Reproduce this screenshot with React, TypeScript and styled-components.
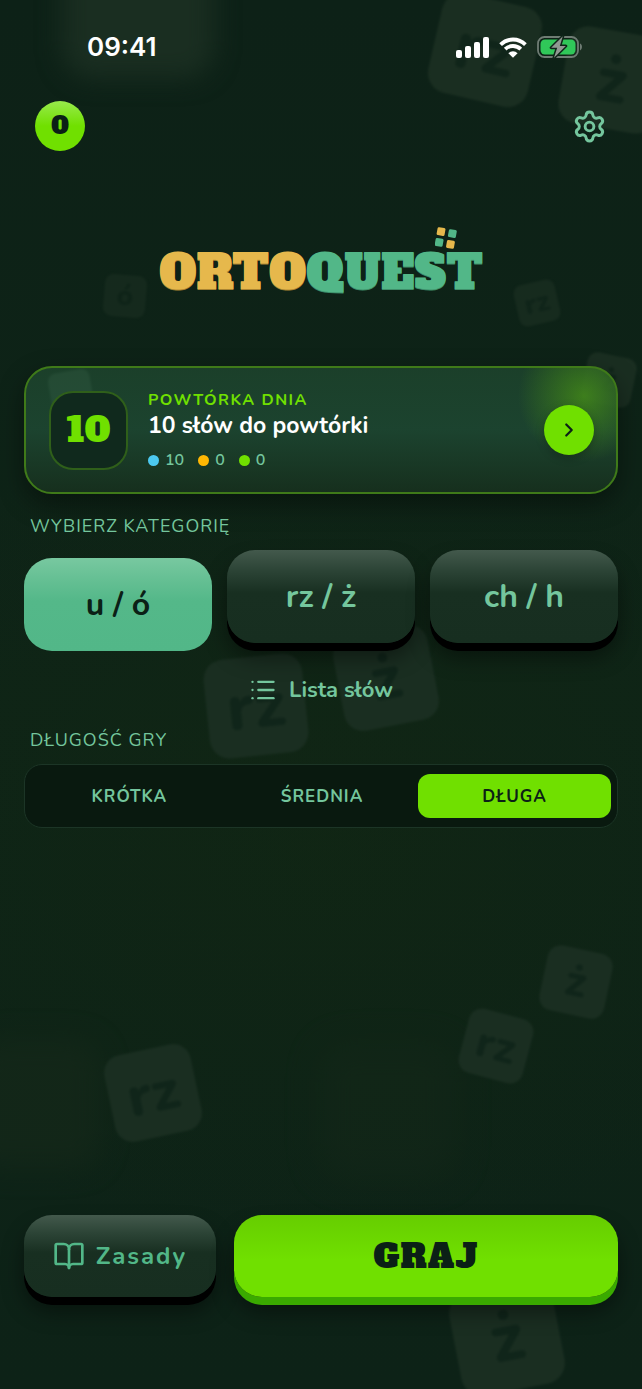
import React, { useState } from "react";
import styled, { createGlobalStyle, css } from "styled-components";
import { BookOpen, ChevronRight, List, Settings } from "lucide-react";

const sans = `"Nunito", "Lato", "Open Sans", sans-serif`;
const slab = `"Alfa Slab One", "DejaVu Serif Condensed", "DejaVu Serif", serif`;

const color = {
  bg: "#0d2217",
  ink: "#0b2016",
  lime: "#70e000",
  limeEdge: "#3aaa00",
  mint: "#74c69d",
  green: "#52b788",
  gold: "#e6b84c",
};

const GlobalStyle = createGlobalStyle`
  *, *::before, *::after { box-sizing: border-box; }
  body { margin: 0; background: ${color.bg}; font-family: ${sans}; }
  button { margin: 0; padding: 0; border: 0; background: none; font: inherit; cursor: pointer; }
`;

const Screen = styled.div`
  position: relative;
  min-height: 100vh;
  display: flex;
  flex-direction: column;
  overflow: hidden;
  color: #fff;
  background:
    radial-gradient(ellipse 90% 30% at 50% 60%, rgba(20, 40, 16, 0.4), transparent),
    linear-gradient(180deg, #0d2117 0%, #0e2417 50%, #0d2217 100%);
`;

const Backdrop = styled.div`
  position: absolute;
  inset: 0;
`;

interface TileProps {
  $x: number;
  $y: number;
  $size: number;
  $turn: number;
  $blur?: number;
  $fade?: number;
  $tone?: string;
}

const Tile = styled.span<TileProps>`
  position: absolute;
  left: ${(p) => (p.$x / 642) * 100}%;
  top: ${(p) => p.$y}px;
  width: ${(p) => p.$size}px;
  height: ${(p) => p.$size}px;
  display: grid;
  place-items: center;
  border-radius: 20%;
  background: ${(p) => p.$tone ?? "#1a2e21"};
  color: #10251a;
  font: 800 ${(p) => Math.round(p.$size * 0.66)}px / 1 ${sans};
  opacity: ${(p) => p.$fade ?? 1};
  filter: blur(${(p) => p.$blur ?? 1}px);
  transform: translate(-50%, -50%) rotate(${(p) => p.$turn}deg);
`;

const StatusBar = styled.div`
  position: relative;
  height: 94px;
  padding: 0 59px 0 87px;
  display: flex;
  align-items: center;
  justify-content: space-between;
`;

const Clock = styled.time`
  font: 600 26px/32px "Inter", sans-serif;
`;

const StatusIcons = styled.div`
  display: flex;
  align-items: center;
  gap: 10px;
`;

const TopBar = styled.header`
  position: relative;
  padding: 7px 35px;
  display: flex;
  align-items: center;
  justify-content: space-between;
`;

const Points = styled.span`
  width: 50px;
  height: 50px;
  display: grid;
  place-items: center;
  border-radius: 50%;
  background: linear-gradient(180deg, #98ea4c 0%, ${color.lime} 50%);
  color: ${color.ink};
  font: 400 24px/1 ${slab};
`;

const IconButton = styled.button`
  display: flex;
  color: ${color.mint};
`;

const Logo = styled.h1`
  position: relative;
  align-self: center;
  margin: 85px 0 63px;
  font: 400 47px/60px ${slab};
  color: ${color.green};
  text-shadow: 0 1px 0 #3f8f6a;
`;

const LogoStart = styled.span`
  color: ${color.gold};
  text-shadow: 0 1px 0 #a98432;
`;

const LogoMark = styled.svg`
  position: absolute;
  right: 26px;
  top: -16px;
`;

const Main = styled.main`
  position: relative;
  padding: 0 24px;
  display: flex;
  flex-direction: column;
`;

const ReviewCard = styled.section`
  padding: 22px 22px 22px 23px;
  display: flex;
  align-items: center;
  gap: 20px;
  border: 2px solid #3f7a19;
  border-radius: 28px;
  background:
    radial-gradient(circle 66px at right 32px top 28px, rgba(96, 190, 10, 0.48), transparent),
    linear-gradient(180deg, rgba(30, 70, 46, 0.82) 0%, rgba(31, 74, 52, 0.82) 50%, rgba(24, 50, 31, 0.82) 100%);
  box-shadow: 0 10px 26px rgba(0, 0, 0, 0.4);
`;

const CountBox = styled.div`
  flex: none;
  width: 79px;
  height: 79px;
  display: grid;
  place-items: center;
  border: 2px solid #2f5f1a;
  border-radius: 24px;
  background: #10291d;
  color: ${color.lime};
  font: 400 35px/1 ${slab};
`;

const ReviewText = styled.div`
  flex: 1;
  min-width: 0;
`;

const Eyebrow = styled.div`
  font-size: 16px;
  line-height: 20px;
  font-weight: 700;
  letter-spacing: 1.5px;
  color: ${color.lime};
`;

const ReviewTitle = styled.h2`
  margin: 0;
  font-size: 23px;
  line-height: 32px;
  font-weight: 700;
`;

const Stats = styled.ul`
  margin: 8px 0 0;
  padding: 0;
  display: flex;
  gap: 14px;
  list-style: none;
  font-size: 16px;
  line-height: 20px;
  font-weight: 600;
  color: ${color.mint};
`;

const Stat = styled.li<{ $dot: string }>`
  display: flex;
  align-items: center;
  gap: 6px;
  &::before {
    content: "";
    width: 11px;
    height: 11px;
    border-radius: 50%;
    background: ${(p) => p.$dot};
  }
`;

const RoundButton = styled.button`
  flex: none;
  width: 50px;
  height: 50px;
  display: grid;
  place-items: center;
  border-radius: 50%;
  background: ${color.lime};
  color: ${color.ink};
  box-shadow: 0 3px 8px rgba(0, 0, 0, 0.25);
`;

const SectionLabel = styled.h3`
  margin: 20px 6px 12px;
  font-size: 18px;
  line-height: 24px;
  font-weight: 400;
  letter-spacing: 1px;
  color: ${color.mint};
`;

const Categories = styled.div`
  display: grid;
  grid-template-columns: repeat(3, 1fr);
  gap: 15px;
`;

const raised = css`
  border-radius: 28px;
  background: linear-gradient(180deg, #43594c 0%, #2c4436 22%, #182f21 46%, #172e20 100%);
  box-shadow: 0 8px 0 #000, 0 14px 22px rgba(0, 0, 0, 0.45);
`;

const CategoryButton = styled.button<{ $active: boolean }>`
  ${raised}
  height: 93px;
  color: ${color.mint};
  font-size: 32px;
  font-weight: 700;
  ${(p) =>
    p.$active &&
    css`
      background: linear-gradient(180deg, #78c8a0 0%, #66c094 22%, #54b889 46%, #52b788 100%);
      box-shadow: none;
      color: ${color.ink};
      transform: translateY(8px);
    `}
`;

const ListButton = styled.button`
  align-self: center;
  margin: 32px 0 3px;
  display: flex;
  align-items: center;
  gap: 12px;
  color: ${color.mint};
  font-size: 22px;
  line-height: 30px;
  font-weight: 700;
`;

const Segments = styled.div`
  padding: 9px 6px 9px 8px;
  display: grid;
  grid-template-columns: repeat(3, 1fr);
  border: 1px solid #1c3526;
  border-radius: 18px;
  background: #09190f;
`;

const Segment = styled.label`
  height: 44px;
  display: grid;
  place-items: center;
  border-radius: 12px;
  color: ${color.mint};
  font-size: 17px;
  font-weight: 700;
  letter-spacing: 1px;
  cursor: pointer;
  &:has(input:checked) {
    background: ${color.lime};
    color: ${color.ink};
  }
`;

const SegmentInput = styled.input`
  position: absolute;
  opacity: 0;
  pointer-events: none;
`;

const Footer = styled.footer`
  position: relative;
  margin-top: auto;
  padding: 48px 24px 92px;
  display: grid;
  grid-template-columns: 1fr 2fr;
  gap: 18px;
`;

const RulesButton = styled.button`
  ${raised}
  height: 82px;
  display: flex;
  align-items: center;
  justify-content: center;
  gap: 11px;
  color: ${color.green};
  font-size: 24px;
  font-weight: 700;
  letter-spacing: 2px;
`;

const PlayButton = styled.button`
  height: 82px;
  border-radius: 28px;
  background: linear-gradient(180deg, #66cd00 0%, ${color.lime} 55%);
  box-shadow: 0 8px 0 ${color.limeEdge}, 0 14px 22px rgba(0, 0, 0, 0.45);
  color: ${color.ink};
  font: 400 33px/1 ${slab};
  letter-spacing: 1px;
`;

interface TileData {
  x: number;
  y: number;
  size: number;
  turn: number;
  text: string;
  blur?: number;
  fade?: number;
  tone?: string;
}

const tiles: TileData[] = [
  { x: 138, y: 2, size: 152, turn: 0, blur: 12, text: "" },
  { x: 36, y: 1104, size: 130, turn: 0, blur: 14, fade: 0.6, tone: "#16291a", text: "" },
  { x: 388, y: 1112, size: 140, turn: 0, blur: 16, fade: 0.4, tone: "#16291a", text: "" },
  { x: 485, y: 50, size: 102, turn: 13, text: "rz" },
  { x: 612, y: 80, size: 98, turn: 10, text: "ż" },
  { x: 125, y: 296, size: 42, turn: 5, fade: 0.65, text: "ó" },
  { x: 537, y: 303, size: 42, turn: -13, fade: 0.75, text: "rz" },
  { x: 609, y: 380, size: 50, turn: 12, text: "ż" },
  { x: 71, y: 392, size: 42, turn: -10, tone: "#3f5c4a", text: "" },
  { x: 256, y: 706, size: 99, turn: -6, text: "rz" },
  { x: 386, y: 678, size: 96, turn: -11, text: "ż" },
  { x: 576, y: 982, size: 66, turn: 12, text: "ż" },
  { x: 496, y: 1046, size: 66, turn: 15, text: "rz" },
  { x: 153, y: 1093, size: 88, turn: -12, text: "rz" },
  { x: 507, y: 1338, size: 105, turn: -11, text: "ż" },
];

const categories = ["u / ó", "rz / ż", "ch / h"];
const lengths = ["KRÓTKA", "ŚREDNIA", "DŁUGA"];

const Signal = () => (
  <svg width="33" height="21" viewBox="0 0 33 21" fill="#fff" aria-hidden="true">
    <rect x="0" y="13" width="6" height="8" rx="2" />
    <rect x="9" y="9" width="6" height="12" rx="2" />
    <rect x="18" y="5" width="6" height="16" rx="2" />
    <rect x="27" y="0" width="6" height="21" rx="2" />
  </svg>
);

const Wifi = () => (
  <svg width="28" height="21" viewBox="0 0 28 21" fill="none" aria-hidden="true">
    <path d="M1.6 7.6a17.6 17.6 0 0 1 24.8 0" stroke="#fff" strokeWidth="3.8" />
    <path d="M6.2 12.2a11.1 11.1 0 0 1 15.6 0" stroke="#fff" strokeWidth="3.8" />
    <path d="M9.4 16.2a6.6 6.6 0 0 1 9.2 0L14 20.8z" fill="#fff" />
  </svg>
);

const Battery = () => (
  <svg width="46" height="24" viewBox="0 0 46 24" aria-hidden="true">
    <rect x="1" y="2" width="40" height="20" rx="6.5" fill="none" stroke="#6f7c74" strokeWidth="1.8" />
    <rect x="3.5" y="4.5" width="35" height="15" rx="4.5" fill="#30c759" />
    <path d="M43 8.6c2.6.8 2.6 6 0 6.8z" fill="#6f7c74" />
    <path
      d="M25.8 1.2 14.2 12.8h6l-3.2 10L28.8 11h-6z"
      fill="#909892"
      stroke="#0f2519"
      strokeWidth="3"
      paintOrder="stroke"
      strokeLinejoin="round"
    />
  </svg>
);

export default function App() {
  const [category, setCategory] = useState(categories[0]);
  const [length, setLength] = useState(lengths[2]);

  return (
    <>
      <GlobalStyle />
      <Screen>
        <Backdrop aria-hidden="true">
          {tiles.map((t) => (
            <Tile
              key={`${t.x}-${t.y}`}
              $x={t.x}
              $y={t.y}
              $size={t.size}
              $turn={t.turn}
              $blur={t.blur}
              $fade={t.fade}
              $tone={t.tone}
            >
              {t.text}
            </Tile>
          ))}
        </Backdrop>

        <StatusBar>
          <Clock>09:41</Clock>
          <StatusIcons>
            <Signal />
            <Wifi />
            <Battery />
          </StatusIcons>
        </StatusBar>

        <TopBar>
          <Points>0</Points>
          <IconButton type="button" aria-label="Ustawienia">
            <Settings size={35} strokeWidth={2} />
          </IconButton>
        </TopBar>

        <Logo>
          <LogoStart>ORTO</LogoStart>QUEST
          <LogoMark width="22" height="22" viewBox="0 0 22 22" aria-hidden="true">
            <g transform="rotate(10 11 11)">
              <rect x="1" y="1.5" width="8" height="8" rx="1.5" fill={color.gold} />
              <rect x="12.5" y="1.5" width="8" height="8" rx="1.5" fill={color.green} />
              <rect x="1" y="12.5" width="8" height="8" rx="1.5" fill={color.green} />
              <rect x="12.5" y="12.5" width="8" height="8" rx="1.5" fill={color.gold} />
            </g>
          </LogoMark>
        </Logo>

        <Main>
          <ReviewCard>
            <CountBox>10</CountBox>
            <ReviewText>
              <Eyebrow>POWTÓRKA DNIA</Eyebrow>
              <ReviewTitle>10 słów do powtórki</ReviewTitle>
              <Stats>
                <Stat $dot="#4cc9f0">10</Stat>
                <Stat $dot="#ffb703">0</Stat>
                <Stat $dot={color.lime}>0</Stat>
              </Stats>
            </ReviewText>
            <RoundButton type="button" aria-label="Rozpocznij powtórkę">
              <ChevronRight size={22} strokeWidth={2.4} />
            </RoundButton>
          </ReviewCard>

          <SectionLabel>WYBIERZ KATEGORIĘ</SectionLabel>
          <Categories>
            {categories.map((c) => (
              <CategoryButton
                key={c}
                type="button"
                aria-pressed={c === category}
                $active={c === category}
                onClick={() => setCategory(c)}
              >
                {c}
              </CategoryButton>
            ))}
          </Categories>

          <ListButton type="button">
            <List size={28} strokeWidth={2} />
            Lista słów
          </ListButton>

          <SectionLabel>DŁUGOŚĆ GRY</SectionLabel>
          <Segments role="radiogroup" aria-label="Długość gry">
            {lengths.map((l) => (
              <Segment key={l}>
                <SegmentInput type="radio" name="length" checked={l === length} onChange={() => setLength(l)} />
                {l}
              </Segment>
            ))}
          </Segments>
        </Main>

        <Footer>
          <RulesButton type="button">
            <BookOpen size={32} strokeWidth={2} />
            Zasady
          </RulesButton>
          <PlayButton type="button">GRAJ</PlayButton>
        </Footer>
      </Screen>
    </>
  );
}
